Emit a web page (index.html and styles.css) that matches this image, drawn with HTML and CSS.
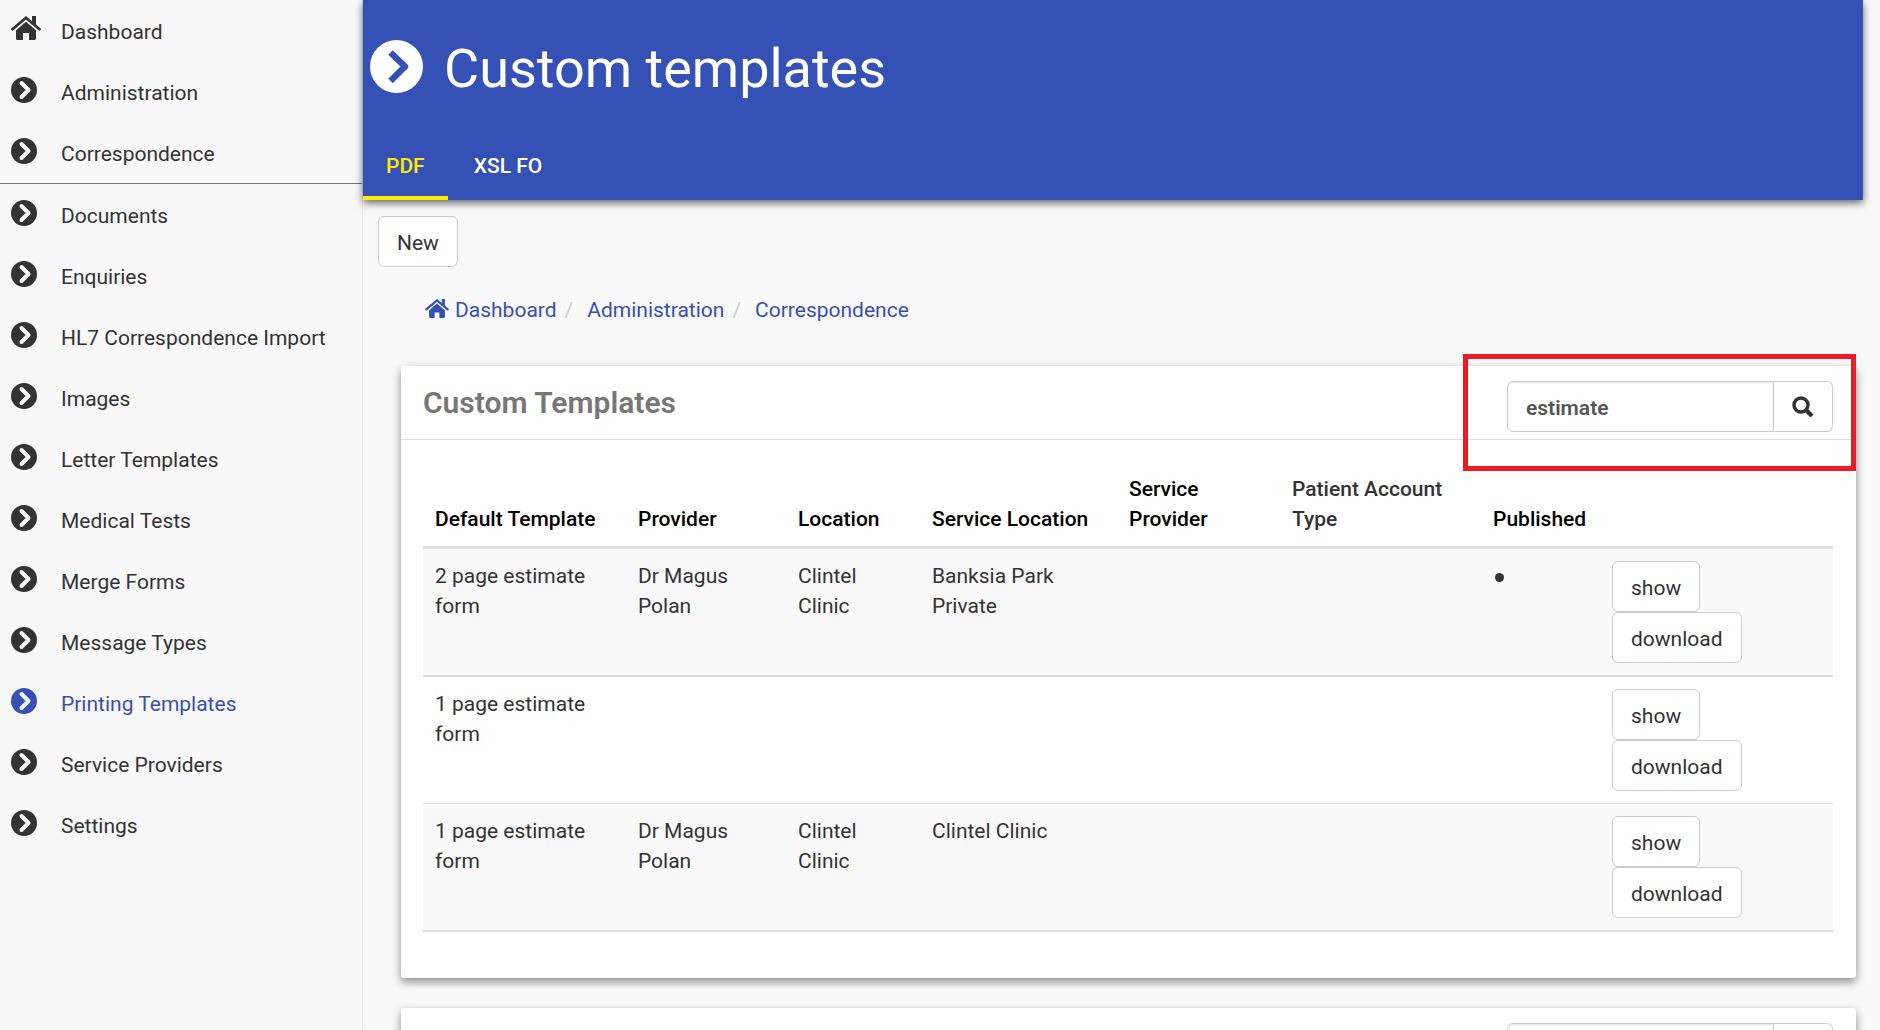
FILE: index.html
```html
<!DOCTYPE html>
<html lang="en">
<head>
    <meta charset="UTF-8">
    <meta name="viewport" content="width=device-width, initial-scale=1.0">
    <title>Custom templates</title>
    <link rel="stylesheet" href="styles.css">
</head>
<body>
    <!-- shared icons -->
    <svg class="sprite" aria-hidden="true">
        <symbol id="home" viewBox="0 0 30 24">
            <path d="M1.500 13.200L15 1.800L28.500 13.200" fill="none" stroke="currentColor" stroke-width="2.800" stroke-linecap="round"/>
            <path d="M21 0h4v9l-4-3.500z"/>
            <path d="M15 5.800L25 14.200V22.500a1.500 1.500 0 0 1-1.500 1.500H18v-7h-6v7H6.500A1.500 1.500 0 0 1 5 22.500V14.200z"/>
        </symbol>
        <symbol id="arrow" viewBox="0 0 26 26">
            <circle cx="13" cy="13" r="13"/>
            <path d="M10.500 6L17.500 13L10.500 20" class="arrow-line"/>
        </symbol>
        <symbol id="search" viewBox="0 0 22 22">
            <circle cx="9" cy="9" r="7" fill="none" stroke="currentColor" stroke-width="3.400"/>
            <path d="M14 14l6 6" stroke="currentColor" stroke-width="4.200"/>
        </symbol>
    </svg>

    <nav class="sidebar">
        <ul class="top-menu">
            <li><a href="#"><svg class="home-icon"><use href="#home"/></svg>Dashboard</a></li>
            <li><a href="#"><svg><use href="#arrow"/></svg>Administration</a></li>
            <li><a href="#"><svg><use href="#arrow"/></svg>Correspondence</a></li>
        </ul>
        <ul>
            <li><a href="#"><svg><use href="#arrow"/></svg>Documents</a></li>
            <li><a href="#"><svg><use href="#arrow"/></svg>Enquiries</a></li>
            <li><a href="#"><svg><use href="#arrow"/></svg>HL7 Correspondence Import</a></li>
            <li><a href="#"><svg><use href="#arrow"/></svg>Images</a></li>
            <li><a href="#"><svg><use href="#arrow"/></svg>Letter Templates</a></li>
            <li><a href="#"><svg><use href="#arrow"/></svg>Medical Tests</a></li>
            <li><a href="#"><svg><use href="#arrow"/></svg>Merge Forms</a></li>
            <li><a href="#"><svg><use href="#arrow"/></svg>Message Types</a></li>
            <li><a href="#" class="active"><svg><use href="#arrow"/></svg>Printing Templates</a></li>
            <li><a href="#"><svg><use href="#arrow"/></svg>Service Providers</a></li>
            <li><a href="#"><svg><use href="#arrow"/></svg>Settings</a></li>
        </ul>
    </nav>

    <main>
        <header class="page-header">
            <h1>
                <svg viewBox="0 0 53 53">
                    <circle cx="26.500" cy="26.500" r="26.500" fill="#fff"/>
                    <path d="M20.500 12.500L35 26.500L20.500 41" fill="none" stroke="#3551b5" stroke-width="6.500" stroke-linejoin="round"/>
                </svg>
                Custom templates
            </h1>
            <div class="tabs">
                <a href="#" class="active">PDF</a>
                <a href="#">XSL FO</a>
            </div>
        </header>

        <div class="toolbar">
            <button type="button" class="btn">New</button>
        </div>

        <ol class="breadcrumb">
            <li><a href="#"><svg><use href="#home"/></svg>Dashboard</a></li>
            <li><a href="#">Administration</a></li>
            <li><a href="#">Correspondence</a></li>
        </ol>

        <section class="card">
            <div class="card-header">
                <h2>Custom Templates</h2>
                <form class="search">
                    <input type="text" value="estimate" aria-label="Search templates">
                    <button type="button" aria-label="Search"><svg><use href="#search"/></svg></button>
                </form>
            </div>
            <div class="card-body">
                <table>
                    <colgroup>
                        <col class="col-template">
                        <col class="col-provider">
                        <col class="col-location">
                        <col class="col-service-location">
                        <col class="col-service-provider">
                        <col class="col-account">
                        <col class="col-published">
                        <col>
                    </colgroup>
                    <thead>
                        <tr>
                            <th><a href="#">Default Template</a></th>
                            <th><a href="#">Provider</a></th>
                            <th><a href="#">Location</a></th>
                            <th><a href="#">Service Location</a></th>
                            <th><a href="#">Service Provider</a></th>
                            <th>Patient Account Type</th>
                            <th><a href="#">Published</a></th>
                            <th></th>
                        </tr>
                    </thead>
                    <tbody>
                        <tr class="group-end">
                            <td>2 page estimate form</td>
                            <td>Dr Magus Polan</td>
                            <td>Clintel Clinic</td>
                            <td>Banksia Park Private</td>
                            <td></td>
                            <td></td>
                            <td><span class="dot"></span></td>
                            <td>
                                <div class="actions">
                                    <button type="button" class="btn">show</button>
                                    <button type="button" class="btn">download</button>
                                </div>
                            </td>
                        </tr>
                        <tr>
                            <td>1 page estimate form</td>
                            <td></td>
                            <td></td>
                            <td></td>
                            <td></td>
                            <td></td>
                            <td></td>
                            <td>
                                <div class="actions">
                                    <button type="button" class="btn">show</button>
                                    <button type="button" class="btn">download</button>
                                </div>
                            </td>
                        </tr>
                        <tr class="group-end">
                            <td>1 page estimate form</td>
                            <td>Dr Magus Polan</td>
                            <td>Clintel Clinic</td>
                            <td>Clintel Clinic</td>
                            <td></td>
                            <td></td>
                            <td></td>
                            <td>
                                <div class="actions">
                                    <button type="button" class="btn">show</button>
                                    <button type="button" class="btn">download</button>
                                </div>
                            </td>
                        </tr>
                    </tbody>
                </table>
            </div>
            <div class="highlight"></div>
        </section>

        <section class="card">
            <div class="card-header">
                <form class="search">
                    <input type="text" aria-label="Search">
                    <button type="button" aria-label="Search"><svg><use href="#search"/></svg></button>
                </form>
            </div>
        </section>
    </main>
</body>
</html>
```

FILE: styles.css
```css
* {
    box-sizing: border-box;
}

body {
    display: flex;
    height: 100vh;
    margin: 0;
    overflow: hidden;
    background-color: #f9f9f9;
    color: #333;
    font-family: Roboto, sans-serif;
    font-size: 21px;
    line-height: 30px;
}

a {
    color: inherit;
    text-decoration: none;
}

svg {
    fill: currentColor;
}

.sprite {
    position: absolute;
    width: 0;
    height: 0;
}

.arrow-line {
    fill: none;
    stroke: #f8f8f8;
    stroke-width: 4;
    stroke-linecap: round;
    stroke-linejoin: round;
}

/* Sidebar */
.sidebar {
    flex: 0 0 363px;
    background-color: #f8f8f8;
    border-right: 1px solid #e7e7e7;
}

.sidebar ul {
    list-style: none;
    margin: 0;
    padding: 0;
}

.sidebar .top-menu {
    border-bottom: 1px solid #777;
}

.sidebar a {
    display: grid;
    grid-template-columns: 50px 1fr;
    height: 61px;
    padding: 16px 11px 0;
    line-height: 32px;
}

.sidebar svg {
    width: 26px;
    height: 26px;
}

.sidebar .home-icon {
    width: 30px;
    height: 24px;
}

.sidebar a.active {
    color: #3551b5;
}

/* Header */
main {
    flex: 1;
    min-width: 0;
    padding-right: 17px;
}

.page-header {
    display: flex;
    flex-direction: column;
    justify-content: space-between;
    height: 200px;
    background-color: #3551b5;
    color: #fff;
    box-shadow: 0 3px 8px rgba(0, 0, 0, 0.6);
}

.page-header h1 {
    display: flex;
    align-items: flex-start;
    gap: 21px;
    margin: 0;
    padding: 40px 7px 0;
    font-size: 54px;
    font-weight: 400;
    line-height: 58px;
}

.page-header h1 svg {
    width: 53px;
    height: 53px;
}

.tabs {
    display: flex;
    gap: 3px;
}

.tabs a {
    height: 66px;
    padding: 17px 23px 0;
    font-weight: 500;
}

.tabs a.active {
    color: #ffeb00;
    border-bottom: 4px solid #ffeb00;
}

.toolbar {
    padding: 16px 15px 0;
}

.btn {
    display: block;
    height: 51px;
    padding: 2px 18px 0;
    border: 1px solid #ccc;
    border-radius: 6px;
    background-color: #fff;
    color: #333;
    font: inherit;
    cursor: pointer;
}

.breadcrumb {
    display: flex;
    list-style: none;
    margin: 28px 0 41px;
    padding: 0 62px;
    color: #3551b5;
}

.breadcrumb svg {
    width: 24px;
    height: 19px;
    margin-right: 6px;
    vertical-align: -1px;
}

.breadcrumb li + li::before {
    content: "/";
    padding: 0 14px 0 8px;
    color: #ccc;
}

/* Cards */
.card {
    position: relative;
    margin: 0 7px 30px 38px;
    border-radius: 3px;
    background-color: #fff;
    box-shadow: 0 4px 10px rgba(0, 0, 0, 0.45);
}

.card-header {
    display: flex;
    justify-content: space-between;
    height: 74px;
    padding: 15px 23px 0 22px;
    border-bottom: 1px solid #ddd;
}

.card-header h2 {
    margin: 6px 0 0;
    color: #777;
    font-size: 30px;
    font-weight: 600;
    line-height: 32px;
}

.search {
    display: flex;
    width: 326px;
    height: 51px;
    margin-left: auto;
}

.search input {
    flex: 1;
    min-width: 0;
    padding: 2px 18px 0;
    border: 1px solid #ccc;
    border-radius: 6px 0 0 6px;
    box-shadow: inset 0 1px 2px rgba(0, 0, 0, 0.1);
    color: #555;
    font: inherit;
    font-weight: 600;
}

.search button {
    width: 59px;
    padding: 0;
    border: 1px solid #ccc;
    border-left: none;
    border-radius: 0 6px 6px 0;
    background-color: #fff;
    color: #333;
}

.search svg {
    display: block;
    width: 22px;
    height: 22px;
    margin: 0 auto;
}

.card-body {
    padding: 22px 23px 46px 22px;
}

table {
    width: 100%;
    border-spacing: 0;
    table-layout: fixed;
}

.col-template {
    width: 203px;
}

.col-provider {
    width: 160px;
}

.col-location {
    width: 134px;
}

.col-service-location {
    width: 197px;
}

.col-service-provider {
    width: 163px;
}

.col-account {
    width: 201px;
}

.col-published {
    width: 119px;
}

th,
td {
    padding: 12px;
    text-align: left;
    vertical-align: top;
}

th {
    border-bottom: 3px solid #ddd;
    font-weight: 500;
    vertical-align: bottom;
}

th a {
    color: #000;
}

td {
    border-bottom: 1px solid #ddd;
}

.group-end td {
    border-bottom-width: 2px;
}

tbody tr:nth-child(odd) {
    background-color: #f9f9f9;
}

.dot {
    display: block;
    width: 9px;
    height: 9px;
    margin: 12px 2px;
    border-radius: 50%;
    background-color: #333;
}

/* red frame round the search box */
.highlight {
    position: absolute;
    top: -12px;
    right: 0;
    width: 393px;
    height: 117px;
    border: 5px solid #ed1c24;
    pointer-events: none;
}
```
